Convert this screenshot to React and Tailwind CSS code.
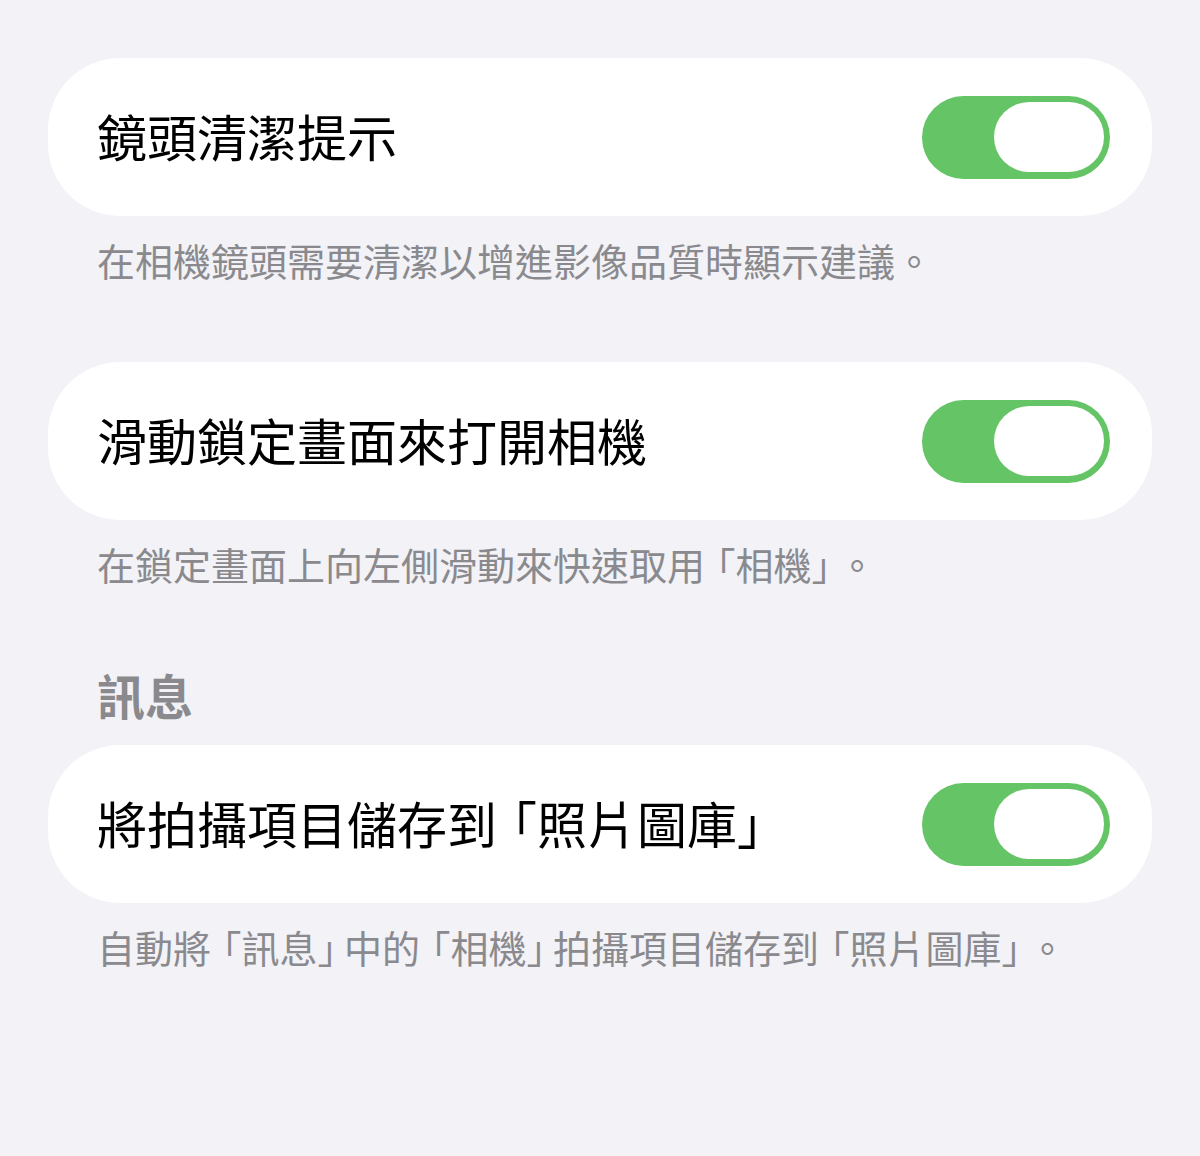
import React from 'react';

const font = { fontFamily: '"Noto Sans CJK TC", "Noto Sans CJK SC", sans-serif' };

// iOS tightens the blank half of the corner brackets
const Open = () => <span className="[font-feature-settings:'halt'] pl-[0.3em]">「</span>;
const Close = () => <span className="[font-feature-settings:'halt'] pr-[0.2em]">」</span>;

const Toggle = () => (
  <div className="w-[188px] h-[83px] rounded-full bg-[#65c466] flex items-center justify-end pr-[6px] shrink-0">
    <div className="w-[110px] h-[70px] rounded-full bg-white" />
  </div>
);

const Row = ({ title }) => (
  <div className="h-[158px] bg-white rounded-[72px] flex items-center justify-between pl-[49px] pr-[42px]">
    <span className="text-[50px] leading-[60px] text-black pb-[4px]">{title}</span>
    <Toggle />
  </div>
);

const Note = ({ children, className = '' }) => (
  <p className={`px-[49px] pt-[21px] pb-[3px] text-[38px] leading-[46px] text-[#8a8a8e] ${className}`}>{children}</p>
);

export default function App() {
  return (
    <div className="min-h-[1156px] bg-[#f2f2f7] px-[48px] pt-[58px]" style={font}>
      {/* 鏡頭清潔 */}
      <Row title="鏡頭清潔提示" />
      <Note className="mb-[76px]">在相機鏡頭需要清潔以增進影像品質時顯示建議。</Note>

      {/* 鎖定畫面 */}
      <Row title="滑動鎖定畫面來打開相機" />
      <Note>
        在鎖定畫面上向左側滑動來快速取用<Open />相機<Close />。
      </Note>

      {/* 訊息 */}
      <h2 className="mt-[76px] mb-[23px] px-[49px] text-[48px] leading-[56px] font-bold text-[#8a8a8e]">訊息</h2>
      <Row
        title={
          <>
            將拍攝項目儲存到<Open />照片圖庫<Close />
          </>
        }
      />
      <Note>
        自動將<Open />訊息<Close />中的<Open />相機<Close />拍攝項目儲存到<Open />照片圖庫<Close />。
      </Note>
    </div>
  );
}
